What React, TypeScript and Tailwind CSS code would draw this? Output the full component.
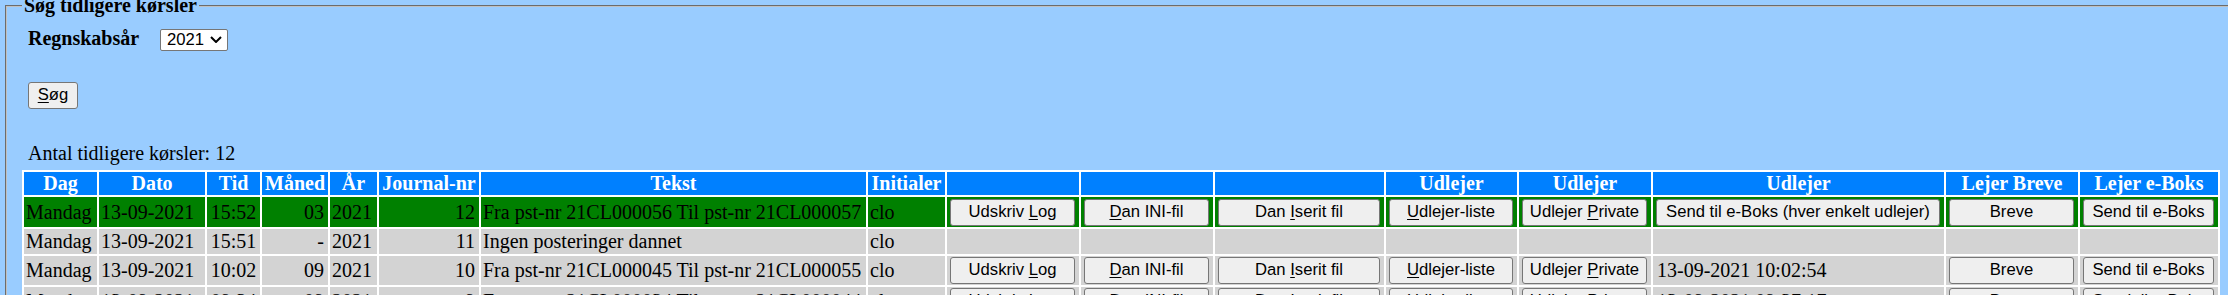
import React from "react";

type R = {
  bg: string;
  dag: string;
  dato: string;
  tid: string;
  md: string;
  aar: string;
  jnr: string;
  tekst: string;
  init: string;
  buttons: boolean;
  udl3: "button" | "text" | "none";
  udl3text?: string;
  h: string;
};

const rows: R[] = [
  {
    bg: "bg-[#008000]",
    dag: "Mandag",
    dato: "13-09-2021",
    tid: "15:52",
    md: "03",
    aar: "2021",
    jnr: "12",
    tekst: "Fra pst-nr 21CL000056 Til pst-nr 21CL000057",
    init: "clo",
    buttons: true,
    udl3: "button",
    h: "h-[30px]",
  },
  {
    bg: "bg-[#d3d3d3]",
    dag: "Mandag",
    dato: "13-09-2021",
    tid: "15:51",
    md: "-",
    aar: "2021",
    jnr: "11",
    tekst: "Ingen posteringer dannet",
    init: "clo",
    buttons: false,
    udl3: "none",
    h: "h-[25px]",
  },
  {
    bg: "bg-[#d3d3d3]",
    dag: "Mandag",
    dato: "13-09-2021",
    tid: "10:02",
    md: "09",
    aar: "2021",
    jnr: "10",
    tekst: "Fra pst-nr 21CL000045 Til pst-nr 21CL000055",
    init: "clo",
    buttons: true,
    udl3: "text",
    udl3text: "13-09-2021 10:02:54",
    h: "h-[29px]",
  },
  {
    bg: "bg-[#d3d3d3]",
    dag: "Mandag",
    dato: "13-09-2021",
    tid: "09:34",
    md: "09",
    aar: "2021",
    jnr: "9",
    tekst: "Fra pst-nr 21CL000034 Til pst-nr 21CL000044",
    init: "clo",
    buttons: true,
    udl3: "text",
    udl3text: "13-09-2021 09:37:17",
    h: "h-[29px]",
  },
];

function Btn({ children }: { children: React.ReactNode }) {
  return (
    <button
      type="button"
      className="h-[27px] w-full whitespace-nowrap rounded-[3px] border border-[#767676] bg-[#efefef] font-['Liberation_Sans',Arial,sans-serif] text-[16.67px] leading-none text-black"
    >
      {children}
    </button>
  );
}

function U({ children }: { children: React.ReactNode }) {
  return <span className="underline underline-offset-[2px]">{children}</span>;
}

const th = "bg-[#0080ff] p-0 text-center align-middle font-bold text-white";
const td = "p-0 align-middle whitespace-nowrap";
const bc = "pl-[3px] pr-[4px] py-0 align-middle";

export default function App() {
  return (
    <div className="h-[295px] w-[2228px] overflow-hidden bg-[#99ccff] font-['Liberation_Serif','Times_New_Roman',serif] text-[20px] leading-[23px] text-black">
      <fieldset className="ml-[5px] mt-[-6px] w-[2300px] border-2 border-[#c0c0c0] pl-[15px] pt-[10px] [border-style:groove]">
        <legend className="px-[2px] font-bold leading-[23px]">Søg tidligere kørsler</legend>

        <div className="ml-[6px] flex h-[22px] items-center">
          <span className="w-[132px] font-bold">Regnskabsår</span>
          <div className="relative h-[22px] w-[68px]">
            <select
              defaultValue="2021"
              className="h-[22px] w-[68px] appearance-none rounded-[2px] border border-[#767676] bg-white pl-[6px] font-['Liberation_Sans',Arial,sans-serif] text-[16.67px] leading-none text-black"
            >
              <option value="2020">2020</option>
              <option value="2021">2021</option>
            </select>
            <svg
              className="pointer-events-none absolute left-[50px] top-[9px]"
              width="12"
              height="7"
              viewBox="0 0 12 7"
              fill="none"
            >
              <path d="M1 1 L6 6 L11 1" stroke="#000" strokeWidth="2" />
            </svg>
          </div>
        </div>

        <div className="ml-[6px] mt-[33px]">
          <button
            type="button"
            className="h-[27px] w-[50px] rounded-[3px] border border-[#767676] bg-[#efefef] font-['Liberation_Sans',Arial,sans-serif] text-[16.67px] leading-none text-black"
          >
            <U>S</U>øg
          </button>
        </div>

        <div className="ml-[6px] mt-[33px] h-[23px]">Antal tidligere kørsler: 12</div>

        <table className="mt-[5px] w-[2198px] table-fixed border-separate border-spacing-[2px] bg-white">
          <colgroup>
            <col className="w-[73px]" />
            <col className="w-[106px]" />
            <col className="w-[53px]" />
            <col className="w-[66px]" />
            <col className="w-[47px]" />
            <col className="w-[100px]" />
            <col className="w-[385px]" />
            <col className="w-[77px]" />
            <col className="w-[132px]" />
            <col className="w-[132px]" />
            <col className="w-[169px]" />
            <col className="w-[131px]" />
            <col className="w-[132px]" />
            <col className="w-[291px]" />
            <col className="w-[132px]" />
            <col className="w-[138px]" />
          </colgroup>
          <thead>
            <tr className="h-[23px]">
              <th className={th}>Dag</th>
              <th className={th}>Dato</th>
              <th className={th}>Tid</th>
              <th className={th}>Måned</th>
              <th className={th}>År</th>
              <th className={th}>Journal-nr</th>
              <th className={th}>Tekst</th>
              <th className={th}>Initialer</th>
              <th className={th}></th>
              <th className={th}></th>
              <th className={th}></th>
              <th className={th}>Udlejer</th>
              <th className={th}>Udlejer</th>
              <th className={th}>Udlejer</th>
              <th className={th}>Lejer Breve</th>
              <th className={th}>Lejer e-Boks</th>
            </tr>
          </thead>
          <tbody>
            {rows.map((r, i) => (
              <tr key={i} className={`${r.h} ${r.bg}`}>
                <td className={`${td} pl-[2px]`}>{r.dag}</td>
                <td className={`${td} pl-[2px]`}>{r.dato}</td>
                <td className={`${td} text-center`}>{r.tid}</td>
                <td className={`${td} pr-[4px] text-right`}>{r.md}</td>
                <td className={`${td} pl-[2px]`}>{r.aar}</td>
                <td className={`${td} pr-[4px] text-right`}>{r.jnr}</td>
                <td className={`${td} pl-[2px]`}>{r.tekst}</td>
                <td className={`${td} pl-[2px]`}>{r.init}</td>
                <td className={bc}>
                  {r.buttons && (
                    <Btn>
                      Udskriv <U>L</U>og
                    </Btn>
                  )}
                </td>
                <td className={bc}>
                  {r.buttons && (
                    <Btn>
                      <U>D</U>an INI-fil
                    </Btn>
                  )}
                </td>
                <td className={bc}>
                  {r.buttons && (
                    <Btn>
                      Dan <U>I</U>serit fil
                    </Btn>
                  )}
                </td>
                <td className={bc}>
                  {r.buttons && (
                    <Btn>
                      <U>U</U>dlejer-liste
                    </Btn>
                  )}
                </td>
                <td className={bc}>
                  {r.buttons && (
                    <Btn>
                      Udlejer <U>P</U>rivate
                    </Btn>
                  )}
                </td>
                {r.udl3 === "button" ? (
                  <td className={bc}>
                    <Btn>Send til e-Boks (hver enkelt udlejer)</Btn>
                  </td>
                ) : (
                  <td className={`${td} pl-[4px]`}>{r.udl3 === "text" ? r.udl3text : ""}</td>
                )}
                <td className={bc}>{r.buttons && <Btn>Breve</Btn>}</td>
                <td className={bc}>{r.buttons && <Btn>Send til e-Boks</Btn>}</td>
              </tr>
            ))}
          </tbody>
        </table>
      </fieldset>
    </div>
  );
}
